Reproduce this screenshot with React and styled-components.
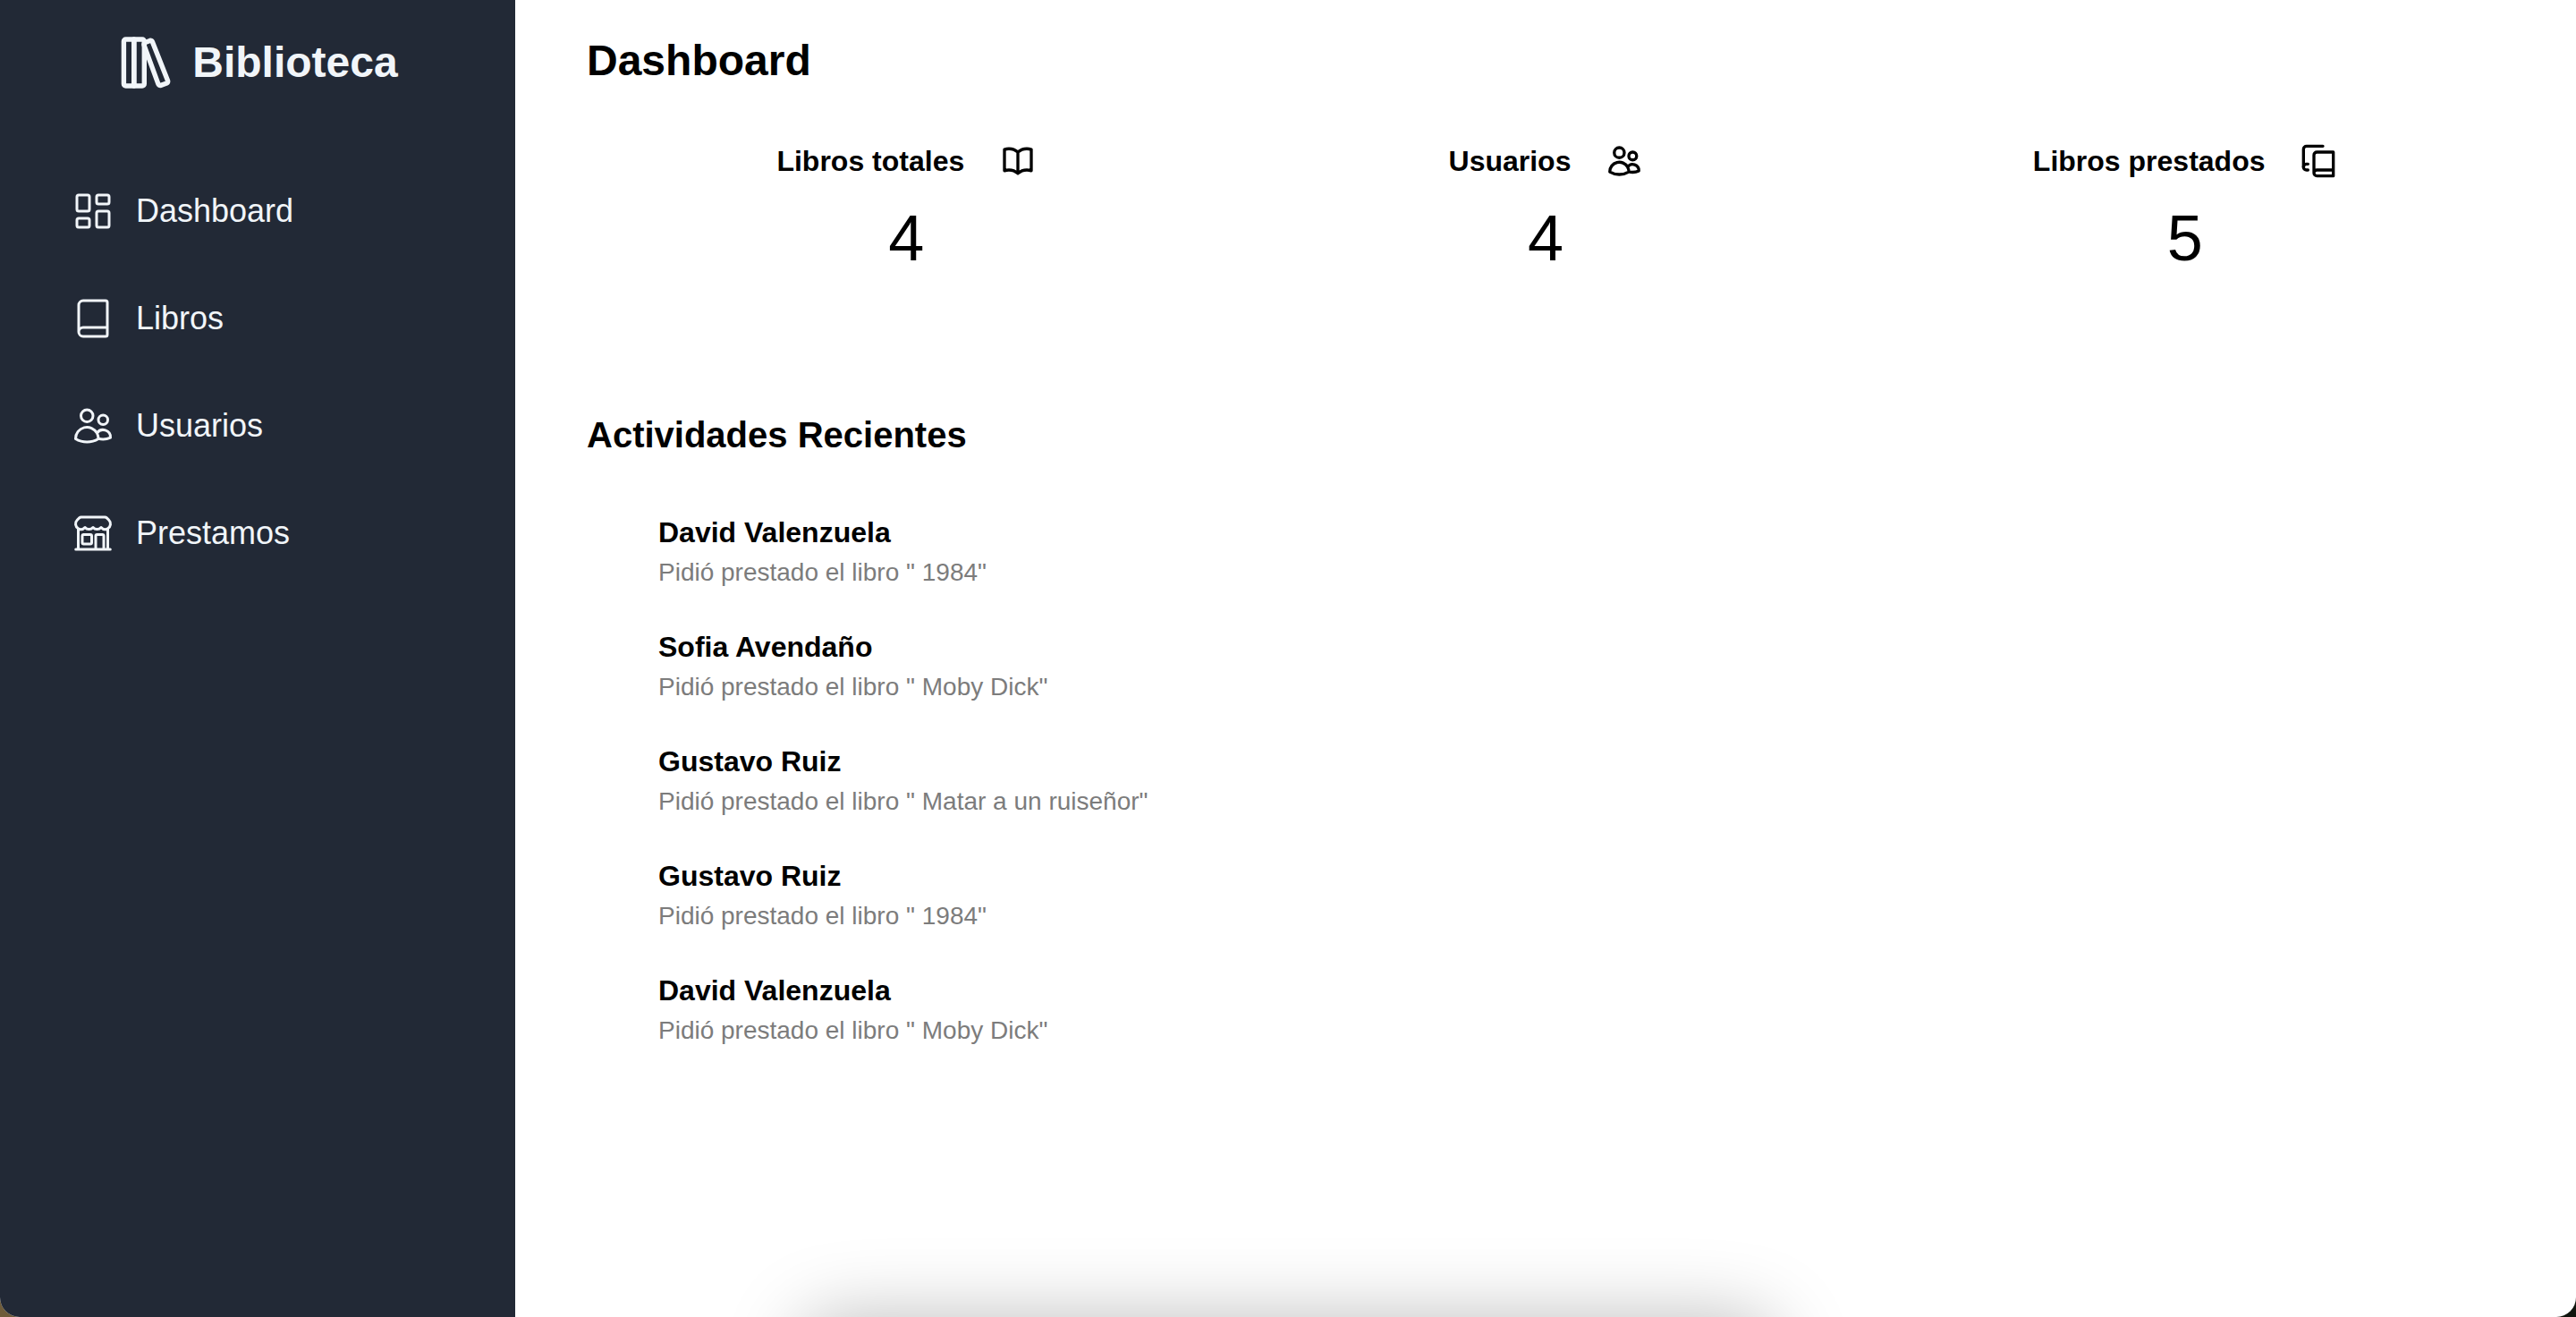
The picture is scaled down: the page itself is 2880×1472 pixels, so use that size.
import React from "react";
import styled, { createGlobalStyle } from "styled-components";
import { Book, LayoutDashboard } from "lucide-react";
import {
  HiOutlineBookOpen,
  HiOutlineBuildingStorefront,
  HiOutlineUsers,
} from "react-icons/hi2";

const GlobalStyle = createGlobalStyle`
  *, *::before, *::after { box-sizing: border-box; }
  body {
    margin: 0;
    background: linear-gradient(90deg, #6f5c3a 50%, #10150e 50%);
    font-family: "Liberation Sans", Arial, Helvetica, sans-serif;
    color: #000;
  }
  h1, h2, h3, p, ul { margin: 0; padding: 0; }
  ul { list-style: none; }
`;

const Layout = styled.div`
  display: flex;
  min-height: 100vh;
  overflow: hidden;
  background: #fff;
  border-radius: 0 0 22px 22px;
`;

const Sidebar = styled.aside`
  flex: 0 0 20%;
  background: #222936;
  color: #f1f5f9;
`;

const Brand = styled.div`
  display: flex;
  align-items: center;
  justify-content: center;
  gap: 20px;
  padding-top: 38px;
  font-size: 48px;
  line-height: 64px;
  font-weight: 700;
`;

const Nav = styled.nav`
  display: flex;
  flex-direction: column;
  padding: 74px 80px 0;
`;

const NavLink = styled.a`
  display: flex;
  align-items: center;
  gap: 24px;
  height: 120px;
  font-size: 36px;
  line-height: 56px;
  color: inherit;
  text-decoration: none;

  svg {
    width: 48px;
    height: 48px;
    stroke-width: 1.5;
  }
`;

const Main = styled.main`
  flex: 1;
  min-width: 0;
  padding: 36px 80px;
`;

const Title = styled.h1`
  font-size: 48px;
  line-height: 64px;
  font-weight: 700;
`;

const Stats = styled.section`
  display: grid;
  grid-template-columns: repeat(3, 1fr);
  margin-top: 56px;
`;

const Stat = styled.div`
  display: flex;
  flex-direction: column;
  align-items: center;
  gap: 22px;
`;

const StatHeader = styled.div`
  display: flex;
  align-items: center;
  gap: 40px;

  svg {
    width: 40px;
    height: 40px;
    stroke-width: 2;
  }
`;

const StatLabel = styled.h3`
  font-size: 32px;
  line-height: 48px;
  font-weight: 700;
`;

const StatValue = styled.p`
  font-size: 72px;
  line-height: 80px;
`;

const Activity = styled.section`
  margin-top: 152px;
`;

const SectionTitle = styled.h2`
  font-size: 40px;
  line-height: 56px;
  font-weight: 700;
`;

const ActivityList = styled.ul`
  display: flex;
  flex-direction: column;
  gap: 38px;
  margin-top: 56px;
  && { padding-left: 80px; }
`;

const Person = styled.h3`
  font-size: 32px;
  line-height: 50px;
  font-weight: 700;
`;

const Detail = styled.p`
  font-size: 28px;
  line-height: 40px;
  font-weight: 300;
  color: #7c7c7c;
`;

const ShadowStrip = styled.div`
  position: fixed;
  left: 0;
  right: 0;
  bottom: 0;
  display: flex;
  justify-content: center;
  height: 110px;
  overflow: hidden;
  pointer-events: none;

  &::after {
    content: "";
    width: 1090px;
    height: 160px;
    margin-top: 110px;
    border-radius: 40px;
    box-shadow: 0 0 84px rgba(0, 0, 0, 0.26);
  }
`;

function LibraryIcon() {
  return (
    <svg width="64" height="64" viewBox="0 0 64 64" fill="none" stroke="currentColor" strokeWidth="5.4" strokeLinejoin="round" aria-hidden="true">
      <path d="M9.6 6h9.2v52H9.6a2.2 2.2 0 0 1-2.2-2.2V8.2A2.2 2.2 0 0 1 9.6 6Z" />
      <path d="M18.8 6h9.3a2.2 2.2 0 0 1 2.2 2.2v47.6a2.2 2.2 0 0 1-2.2 2.2h-9.3Z" />
      <path d="m31.4 9.4 5.2-2a2.2 2.2 0 0 1 2.8 1.3l17.2 43.5a2.2 2.2 0 0 1-1.2 2.8l-6.6 2.4a2.2 2.2 0 0 1-2.8-1.3L30.1 12.6a2.4 2.4 0 0 1 1.3-3.2Z" />
    </svg>
  );
}

function BookCopyIcon() {
  return (
    <svg viewBox="0 0 24 24" fill="none" stroke="currentColor" strokeLinecap="round" strokeLinejoin="round" aria-hidden="true">
      <path d="M2 16V4a2 2 0 0 1 2-2h11" />
      <path d="M5 14H4a2 2 0 1 0 0 4h1" />
      <path d="M22 18H11a2 2 0 1 0 0 4h11V6H11a2 2 0 0 0-2 2v12" />
    </svg>
  );
}

const links = [
  { label: "Dashboard", Icon: LayoutDashboard },
  { label: "Libros", Icon: Book },
  { label: "Usuarios", Icon: HiOutlineUsers },
  { label: "Prestamos", Icon: HiOutlineBuildingStorefront },
];

const stats = [
  { label: "Libros totales", value: 4, Icon: HiOutlineBookOpen },
  { label: "Usuarios", value: 4, Icon: HiOutlineUsers },
  { label: "Libros prestados", value: 5, Icon: BookCopyIcon },
];

const activities = [
  { person: "David Valenzuela", book: "1984" },
  { person: "Sofia Avendaño", book: "Moby Dick" },
  { person: "Gustavo Ruiz", book: "Matar a un ruiseñor" },
  { person: "Gustavo Ruiz", book: "1984" },
  { person: "David Valenzuela", book: "Moby Dick" },
];

export default function App() {
  return (
    <>
      <GlobalStyle />
      <Layout>
        <Sidebar>
          <Brand>
            <LibraryIcon />
            <span>Biblioteca</span>
          </Brand>
          <Nav>
            {links.map(({ label, Icon }) => (
              <NavLink key={label} href={`#${label.toLowerCase()}`}>
                <Icon />
                {label}
              </NavLink>
            ))}
          </Nav>
        </Sidebar>
        <Main>
          <Title>Dashboard</Title>
          <Stats>
            {stats.map(({ label, value, Icon }) => (
              <Stat key={label}>
                <StatHeader>
                  <StatLabel>{label}</StatLabel>
                  <Icon />
                </StatHeader>
                <StatValue>{value}</StatValue>
              </Stat>
            ))}
          </Stats>
          <Activity>
            <SectionTitle>Actividades Recientes</SectionTitle>
            <ActivityList>
              {activities.map(({ person, book }, index) => (
                <li key={index}>
                  <Person>{person}</Person>
                  <Detail>{`Pidió prestado el libro " ${book}"`}</Detail>
                </li>
              ))}
            </ActivityList>
          </Activity>
        </Main>
      </Layout>
      <ShadowStrip />
    </>
  );
}
